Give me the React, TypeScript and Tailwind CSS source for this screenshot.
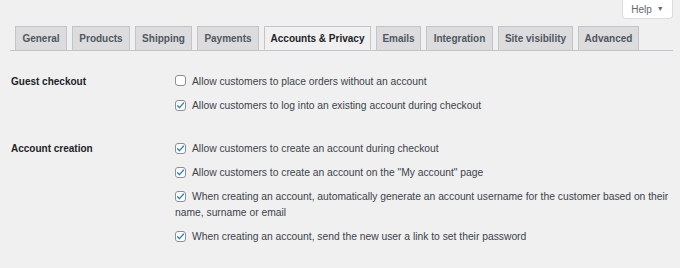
import React from 'react'

const tabs: [string, number][] = [
  ['General', 52],
  ['Products', 58],
  ['Shipping', 57],
  ['Payments', 62],
  ['Accounts & Privacy', 107],
  ['Emails', 45],
  ['Integration', 67],
  ['Site visibility', 75],
  ['Advanced', 61],
]

function Checkbox({ checked }: { checked: boolean }) {
  return (
    <span className="inline-flex items-center justify-center w-[11px] h-[11px] mr-[6px] align-[-1px] bg-white border border-[#8c8f94] rounded-[3px]">
      {checked && (
        <svg width="9" height="9" viewBox="0 0 10 10" fill="none">
          <path d="M1.8 5.2 L4 7.4 L8.4 2.2" stroke="#3582c4" strokeWidth="1.5" strokeLinecap="round" strokeLinejoin="round" />
        </svg>
      )}
    </span>
  )
}

function Option({ checked, children }: { checked: boolean; children: React.ReactNode }) {
  return (
    <div className="leading-[16px] text-[#3c434a]">
      <Checkbox checked={checked} />
      {children}
    </div>
  )
}

export default function App() {
  return (
    <div className="w-[680px] h-[268px] bg-[#f0f0f1] overflow-hidden" style={{ fontFamily: '"Liberation Sans", Arial, sans-serif' }}>
      {/* Help tab */}
      <div className="flex justify-end pr-[7px]">
        <div className="w-[51px] h-[19px] bg-white border border-t-0 border-[#dcdcde] rounded-b-[4px] flex items-center justify-center text-[10px] text-[#646970]">
          Help
          <span className="ml-[5px] text-[7px]">▼</span>
        </div>
      </div>

      {/* Tabs */}
      <div className="mt-[7px] ml-[10px] mr-[7px] border-b border-[#c3c4c7] flex gap-[5px] pl-[5px]">
        {tabs.map(([t, w]) => {
          const active = t === 'Accounts & Privacy'
          return (
            <div
              key={t}
              style={{ width: w }}
              className={
                active
                  ? 'shrink-0 whitespace-nowrap h-[24px] -mb-px flex items-center justify-center text-[10px] font-bold text-[#1d2327] bg-[#f0f0f1] border border-[#c3c4c7] border-b-[#f0f0f1]'
                  : 'shrink-0 whitespace-nowrap h-[24px] flex items-center justify-center text-[10px] font-bold text-[#50575e] bg-[#dcdcde] border border-b-0 border-[#c3c4c7]'
              }
            >
              {t}
            </div>
          )
        })}
      </div>

      {/* Settings */}
      <div className="text-[10.3px]">
        <div className="flex mt-[23px]">
          <div className="w-[175px] shrink-0 pl-[11px] font-bold text-[10px] leading-[16px] text-[#1d2327]">Guest checkout</div>
          <div className="flex flex-col gap-[8px]">
            <Option checked={false}>Allow customers to place orders without an account</Option>
            <Option checked>Allow customers to log into an existing account during checkout</Option>
          </div>
        </div>

        <div className="flex mt-[27px]">
          <div className="w-[175px] shrink-0 pl-[11px] font-bold text-[10px] leading-[16px] text-[#1d2327]">Account creation</div>
          <div className="flex flex-col gap-[8px]">
            <Option checked>Allow customers to create an account during checkout</Option>
            <Option checked>Allow customers to create an account on the "My account" page</Option>
            <Option checked>
              <span className="whitespace-nowrap">When creating an account, automatically generate an account username for the customer based on their</span>
              <br />
              name, surname or email
            </Option>
            <Option checked>When creating an account, send the new user a link to set their password</Option>
          </div>
        </div>
      </div>
    </div>
  )
}
